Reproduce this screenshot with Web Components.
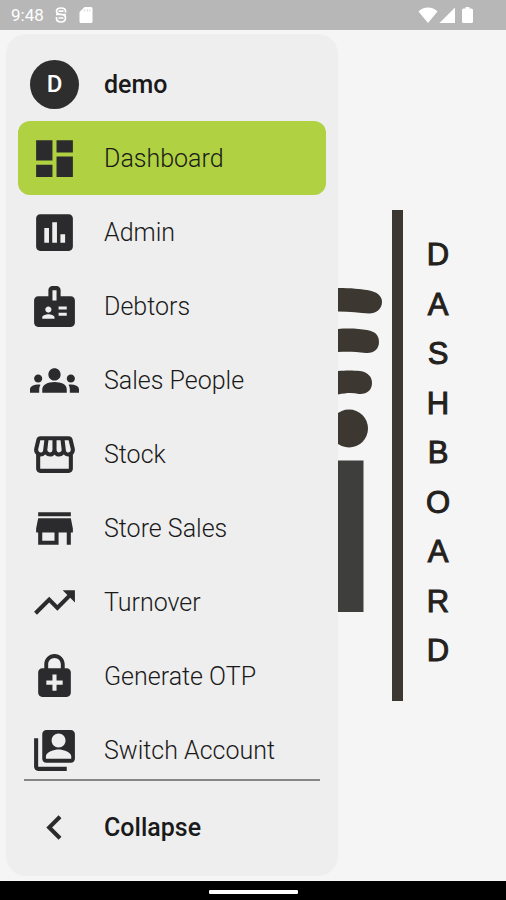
<!DOCTYPE html>
<html lang="en">
<head>
<meta charset="utf-8">
<meta name="viewport" content="width=device-width, initial-scale=1">
<title>Dashboard</title>
<style>
  html, body { margin: 0; height: 100%; }
  body { font-family: Roboto, "Liberation Sans", sans-serif; color: #1a1a1a; background: #f5f5f5; }
</style>
</head>
<body>
<app-shell>
  <status-bar slot="status" time="9:48"></status-bar>
  <dashboard-art slot="stage" word="DASHBOARD"></dashboard-art>
  <nav-drawer slot="drawer" user="demo">
    <nav-item icon="dashboard" active>Dashboard</nav-item>
    <nav-item icon="chart">Admin</nav-item>
    <nav-item icon="badge">Debtors</nav-item>
    <nav-item icon="groups">Sales People</nav-item>
    <nav-item icon="storefront">Stock</nav-item>
    <nav-item icon="store">Store Sales</nav-item>
    <nav-item icon="trending">Turnover</nav-item>
    <nav-item icon="lock">Generate OTP</nav-item>
    <nav-item icon="accounts">Switch Account</nav-item>
  </nav-drawer>
  <home-bar slot="home"></home-bar>
</app-shell>

<script>
const ICONS = {
  dashboard: 'M3 13h8V3H3v10zm0 8h8v-6H3v6zm10 0h8V11h-8v10zm0-18v6h8V3h-8z',
  chart: 'M19 3H5c-1.1 0-2 .9-2 2v14c0 1.1.9 2 2 2h14c1.1 0 2-.9 2-2V5c0-1.1-.9-2-2-2zM9.300 17H7v-7.200h2.300v7.200zm3.900 0h-2.300V7h2.300v10zm4 0h-2.300v-4.200h2.300V17z',
  badge: 'M20 7h-5V4c0-1.1-.9-2-2-2h-2c-1.1 0-2 .9-2 2v3H4c-1.1 0-2 .9-2 2v11c0 1.1.9 2 2 2h16c1.1 0 2-.9 2-2V9c0-1.1-.9-2-2-2zM9 12c.83 0 1.5.67 1.5 1.5S9.83 15 9 15s-1.5-.67-1.5-1.5S8.17 12 9 12zm3 6H6v-.75c0-1 2-1.5 3-1.5s3 .5 3 1.5V18zm1-9h-2V4h2v5zm5 7.5h-4V15h4v1.5zm0-3h-4V12h4v1.5z',
  groups: 'M12 12.75c1.63 0 3.07.39 4.24.9 1.08.48 1.76 1.56 1.76 2.73V18H6v-1.61c0-1.18.68-2.26 1.76-2.73 1.17-.52 2.61-.91 4.24-.91zM4 13c1.1 0 2-.9 2-2s-.9-2-2-2-2 .9-2 2 .9 2 2 2zm1.13 1.1c-.37-.06-.74-.1-1.13-.1-.99 0-1.93.21-2.78.58C.48 14.9 0 15.62 0 16.43V18h4.5v-1.61c0-.83.23-1.61.63-2.29zM20 13c1.1 0 2-.9 2-2s-.9-2-2-2-2 .9-2 2 .9 2 2 2zm4 3.43c0-.81-.48-1.53-1.22-1.85-.85-.37-1.79-.58-2.78-.58-.39 0-.76.04-1.13.1.4.68.63 1.46.63 2.29V18H24v-1.57zM12 6c1.66 0 3 1.34 3 3s-1.34 3-3 3-3-1.34-3-3 1.34-3 3-3z',
  storefront: 'M21.9 8.89l-1.05-4.37c-.22-.9-1-1.52-1.91-1.52H5.05c-.9 0-1.69.63-1.9 1.52L2.1 8.89c-.24 1.02-.02 2.06.62 2.88.08.11.19.19.28.29V19c0 1.1.9 2 2 2h14c1.1 0 2-.9 2-2v-6.94c.09-.09.2-.18.28-.28.64-.82.87-1.87.62-2.89zm-2.99-3.9l1.05 4.37c.1.42.01.84-.25 1.17-.14.18-.44.47-.94.47-.61 0-1.14-.49-1.21-1.14L16.98 5l1.93-.01zM13 5h1.96l.54 4.52c.05.39-.07.78-.33 1.07-.22.26-.54.41-.95.41-.67 0-1.22-.59-1.22-1.31V5zM8.49 9.52L9.04 5H11v4.69c0 .72-.55 1.31-1.29 1.31-.34 0-.65-.15-.89-.41-.25-.29-.37-.68-.33-1.07zm-4.45-.16L5.05 5h1.97l-.58 4.86c-.08.65-.6 1.14-1.21 1.14-.49 0-.8-.29-.93-.47-.27-.32-.36-.75-.26-1.17zM5 19v-6.03c.08.01.15.03.23.03.87 0 1.66-.36 2.24-.95.6.6 1.4.95 2.31.95.87 0 1.65-.36 2.23-.93.59.57 1.39.93 2.29.93.84 0 1.64-.35 2.24-.95.58.59 1.37.95 2.24.95.08 0 .15-.02.23-.03V19H5z',
  store: 'M20 4H4v2h16V4zm1 10v-2l-1-5H4l-1 5v2h1v6h10v-6h4v6h2v-6h1zm-9 4H6v-4h6v4z',
  trending: 'M16 6l2.29 2.29-4.88 4.88-4-4L2 16.59 3.41 18l6-6 4 4 6.3-6.29L22 12V6z',
  lock: 'M18 8h-1V6c0-2.76-2.24-5-5-5S7 3.24 7 6v2H6c-1.1 0-2 .9-2 2v10c0 1.1.9 2 2 2h12c1.1 0 2-.9 2-2V10c0-1.1-.9-2-2-2zM8.9 6c0-1.71 1.39-3.1 3.1-3.1s3.1 1.39 3.1 3.1v2H8.9V6zM16 16h-3v3h-2v-3H8v-2h3v-3h2v3h3v2z',
  accounts: 'M4 6H2v14c0 1.1.9 2 2 2h14v-2H4V6zm16-4H8c-1.1 0-2 .9-2 2v12c0 1.1.9 2 2 2h12c1.1 0 2-.9 2-2V4c0-1.1-.9-2-2-2zm-6 1.7c1.9 0 3.4 1.5 3.4 3.4s-1.5 3.4-3.4 3.4-3.4-1.5-3.4-3.4 1.5-3.4 3.4-3.4zm6.2 12.3H7.8v-1.2c0-2.1 4.1-3.3 6.2-3.3s6.2 1.2 6.2 3.3V16z',
  back: 'M15.41 7.41L14 6l-6 6 6 6 1.41-1.41L10.83 12z'
};

class BaseElement extends HTMLElement {
  connectedCallback() {
    if (!this.shadowRoot) this.attachShadow({ mode: 'open' }).innerHTML = this.render();
  }
}

customElements.define('app-shell', class extends BaseElement {
  render() {
    return `<style>
      :host { display: flex; flex-direction: column; height: 100vh; }
      main { flex: 1; min-height: 0; display: grid; grid-template: minmax(0, 1fr) / minmax(0, 1fr); }
      slot[name=stage]::slotted(*), slot[name=drawer]::slotted(*) { grid-area: 1 / 1; }
    </style>
    <slot name="status"></slot>
    <main><slot name="stage"></slot><slot name="drawer"></slot></main>
    <slot name="home"></slot>`;
  }
});

customElements.define('status-bar', class extends BaseElement {
  render() {
    return `<style>
      :host { display: flex; align-items: center; justify-content: space-between; height: 30px;
              padding: 0 32px 0 11px; background: #b7b7b7; color: #fff; font-size: 17px; line-height: 20px; }
      div { display: flex; align-items: center; }
      .left { gap: 11px; }
      svg { display: block; fill: currentColor; }
    </style>
    <div class="left"><span>${this.getAttribute('time')}</span>
      <svg width="12" height="16" viewBox="0 0 12 16" style="fill:none" stroke="currentColor" stroke-width="1.7"><path d="M10.500 5.500V4c0-2-1.600-3-4.500-3S1.500 2 1.500 4.200 3 7 6 7.300s4.500 1 4.500 3.500-1.700 4.200-4.500 4.200-4.500-1.600-4.500-3.500V10M3.500 4.200h5M1 7.500h10M3.500 11h5"/></svg>
      <svg width="16" height="16" viewBox="0 0 16 16"><path fill-rule="evenodd" d="M6.500 0h6.500a1.500 1.500 0 0 1 1.500 1.500v13A1.500 1.500 0 0 1 13 16H3a1.500 1.500 0 0 1-1.500-1.500V5zM6.500 2.500v2h.6v-2zM9 2.500v2h.6v-2zM11.500 2.500v2h.6v-2z"/></svg>
    </div>
    <div>
      <svg width="20" height="16" viewBox="0 0 20 16"><path d="M10 16L.5 4.500C3 2 6.300.5 10 .5s7 1.500 9.500 4z"/></svg>
      <svg width="18" height="16" viewBox="0 0 18 16"><path d="M17 .5V16H1.500z"/></svg>
      <svg width="18" height="16" viewBox="0 0 18 16"><path d="M9.500 0h4v1.500h2a1.500 1.500 0 0 1 1.500 1.500v11.500a1.500 1.500 0 0 1-1.500 1.500h-8A1.500 1.500 0 0 1 6 14.500V3a1.500 1.500 0 0 1 1.500-1.500h2z"/></svg>
    </div>`;
  }
});

customElements.define('nav-icon', class extends BaseElement {
  render() {
    return `<style>
      :host { display: block; flex: none; width: 49px; height: 49px; }
      svg { display: block; width: 100%; height: 100%; fill: #2b2b2d; }
    </style>
    <svg viewBox="0 0 24 24" aria-hidden="true"><path d="${ICONS[this.getAttribute('name')]}"/></svg>`;
  }
});

customElements.define('nav-item', class extends BaseElement {
  render() {
    return `<style>
      :host { display: block; flex: none; }
      a { display: flex; align-items: center; gap: 25px; height: 74px; padding: 0 12px; box-sizing: border-box;
          border-radius: 12px; color: inherit; text-decoration: none; font-size: 25px; line-height: 33px; font-weight: 300; white-space: nowrap; }
      :host([active]) a { background: #b0d141; }
    </style>
    <a href="#"${this.hasAttribute('active') ? ' aria-current="page"' : ''}><nav-icon name="${this.getAttribute('icon')}"></nav-icon><span><slot></slot></span></a>`;
  }
});

customElements.define('nav-drawer', class extends BaseElement {
  render() {
    const user = this.getAttribute('user');
    return `<style>
      :host { display: flex; flex-direction: column; justify-self: start; box-sizing: border-box; min-height: 0;
              width: 332px; max-width: calc(100% - 12px); margin: 4px 6px 5px; padding: 14px 12px 2px;
              background: #eee; border-radius: 20px; font-size: 25px; line-height: 33px; font-weight: 500; }
      header, button { display: flex; align-items: center; gap: 25px; flex: none; padding: 0 12px; }
      header { height: 73px; }
      .avatar { display: grid; place-items: center; width: 49px; height: 49px; border-radius: 50%;
                background: #2e2e2e; color: #fff; font-size: 24px; }
      nav { flex: 1; min-height: 0; display: flex; flex-direction: column; overflow: auto; scrollbar-width: none; }
      hr { flex: none; width: auto; height: 2px; margin: 0 6px; border: 0; background: #858585; }
      button { height: 93px; border: 0; background: none; font: inherit; color: inherit; text-align: left; }
    </style>
    <header><span class="avatar">${user[0].toUpperCase()}</span><span>${user}</span></header>
    <nav aria-label="Main"><slot></slot></nav>
    <hr>
    <button type="button"><nav-icon name="back"></nav-icon><span>Collapse</span></button>`;
  }
});

customElements.define('dashboard-art', class extends BaseElement {
  render() {
    const letters = [...this.getAttribute('word')].map(c => `<span>${c}</span>`).join('');
    return `<style>
      :host { display: flex; align-items: center; justify-content: flex-end; padding-right: 54px; background: #f5f5f5; }
      .art { display: flex; }
      svg { display: block; fill: #3c3831; }
      .rule { width: 11px; margin: 0 21px 0 10px; background: #3c3831; }
      .word { display: flex; flex-direction: column; justify-content: space-between; align-items: center;
              width: 28px; padding: 20px 0 26px; box-sizing: border-box;
              font: 31px/49px "Liberation Sans", Arial, sans-serif; color: #24211c; -webkit-text-stroke: 1px #24211c; }
    </style>
    <div class="art">
      <svg width="100" height="491" viewBox="0 0 100 491" aria-hidden="true">
        <path d="M20 78H56C70 78 78 79 85 80C95 81.500 100 86 100 92C100 99 94 103.500 87 103.500C78 103 68 101.500 56 101.500H20z"/>
        <path d="M20 119H56C68 118 78 119 85 120C94 121.500 97 126 97 132C97 139 92 143.500 84 143C74 142 68 141.500 56 142H20z"/>
        <path d="M20 161H56C66 160 72 160.500 78 161C86 162 90 167 90 173C90 180 85 184.500 77 184C70 182.500 64 183 56 184.500H20z"/>
        <circle cx="67" cy="218.500" r="19"/>
        <path fill="#3e3e3c" d="M20 250.500h61.500V402H20z"/>
      </svg>
      <div class="rule"></div>
      <div class="word">${letters}</div>
    </div>`;
  }
});

customElements.define('home-bar', class extends BaseElement {
  render() {
    return `<style>
      :host { display: grid; place-items: center; height: 19px; padding-top: 2px; box-sizing: border-box; background: #000; }
      i { display: block; width: 89px; height: 4px; border-radius: 1px; background: #fff; }
    </style><i></i>`;
  }
});
</script>
</body>
</html>
